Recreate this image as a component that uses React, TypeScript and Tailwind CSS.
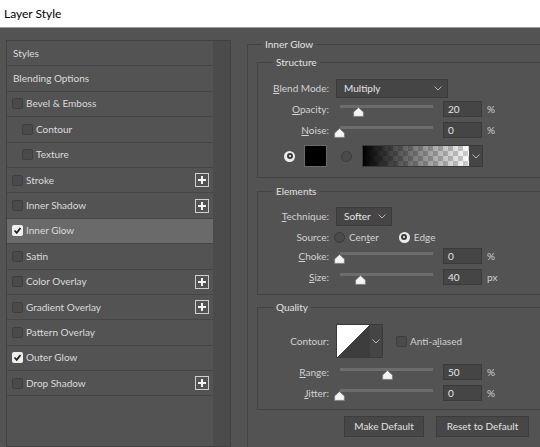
import React from 'react';

const FONT = { fontFamily: 'Lato, "Open Sans", sans-serif' };

type Row = {
	label: string;
	plain?: boolean;
	checked?: boolean;
	indent?: boolean;
	plus?: boolean;
	selected?: boolean;
};

const ROWS: Row[] = [
	{ label: 'Styles', plain: true },
	{ label: 'Blending Options', plain: true },
	{ label: 'Bevel & Emboss' },
	{ label: 'Contour', indent: true },
	{ label: 'Texture', indent: true },
	{ label: 'Stroke', plus: true },
	{ label: 'Inner Shadow', plus: true },
	{ label: 'Inner Glow', checked: true, selected: true },
	{ label: 'Satin' },
	{ label: 'Color Overlay', plus: true },
	{ label: 'Gradient Overlay', plus: true },
	{ label: 'Pattern Overlay' },
	{ label: 'Outer Glow', checked: true },
	{ label: 'Drop Shadow', plus: true },
];

function Checkbox({ checked }: { checked?: boolean }) {
	if (checked) {
		return (
			<span className="flex h-[11px] w-[11px] items-center justify-center rounded-[2px] bg-[#efefef]">
				<svg width="9" height="9" viewBox="0 0 9 9">
					<path d="M1.5 4.5 L3.7 6.8 L7.5 2" fill="none" stroke="#222" strokeWidth="1.8" />
				</svg>
			</span>
		);
	}
	return <span className="block h-[11px] w-[11px] rounded-[2px] border border-[#3e3e3e] bg-[#4a4a4a]" />;
}

function PlusBox() {
	return (
		<span className="ml-auto mr-[4px] flex h-[14px] w-[14px] items-center justify-center border border-[#cfcfcf]">
			<svg width="10" height="10" viewBox="0 0 10 10">
				<path d="M5 1 V9 M1 5 H9" stroke="#f2f2f2" strokeWidth="2" />
			</svg>
		</span>
	);
}

function Chevron() {
	return (
		<svg width="8" height="5" viewBox="0 0 8 5">
			<path d="M0.5 0.5 L4 4 L7.5 0.5" fill="none" stroke="#b5b5b5" strokeWidth="1" />
		</svg>
	);
}

function Radio({ checked }: { checked?: boolean }) {
	if (checked) {
		return (
			<span className="flex h-[11px] w-[11px] items-center justify-center rounded-full bg-[#ececec]">
				<span className="flex h-[6px] w-[6px] items-center justify-center rounded-full bg-[#3a3a3a]">
					<span className="block h-[2px] w-[2px] rounded-full bg-white" />
				</span>
			</span>
		);
	}
	return <span className="block h-[11px] w-[11px] rounded-full border border-[#3c3c3c] bg-[#4a4a4a]" />;
}

function Thumb({ left }: { left: number }) {
	return (
		<svg
			className="absolute top-[6px]"
			style={{ left }}
			width="11"
			height="10"
			viewBox="0 0 11 10"
		>
			<path d="M5.5 0.6 L10.4 5 L10.4 9.4 L0.6 9.4 L0.6 5 Z" fill="#f4f4f4" stroke="#7a7a7a" strokeWidth="0.8" />
		</svg>
	);
}

function Label({ first, rest, under }: { first?: string; rest: string; under?: boolean }) {
	return (
		<div className="w-[71px] shrink-0 text-right text-[#d2d2d2]">
			{under ? <span className="underline underline-offset-1">{first}</span> : first}
			{rest}
		</div>
	);
}

function SliderRow({
	first,
	rest,
	value,
	unit,
	thumb,
	mt,
}: {
	first: string;
	rest: string;
	value: string;
	unit: string;
	thumb: number;
	mt: string;
}) {
	return (
		<div className={`flex h-[16px] items-center ${mt}`}>
			<Label first={first} rest={rest} under />
			<div className="relative ml-[7px] h-full w-[100px]">
				<div className="absolute left-[4px] top-[4px] h-[3px] w-[93px] bg-[#6c6c6c]" />
				<Thumb left={thumb - 336 - 5} />
			</div>
			<div className="ml-[7px] flex h-[16px] w-[39px] items-center border border-[#3a3a3a] bg-[#454545] pl-[4px] text-[#e6e6e6]">
				{value}
			</div>
			<span className="ml-[5px] text-[#d2d2d2]">{unit}</span>
		</div>
	);
}

function Legend({ children }: { children: React.ReactNode }) {
	return <legend className="ml-[15px] px-[3px] text-[10px] leading-[14px] text-[#e2e2e2]">{children}</legend>;
}

export default function App() {
	return (
		<div className="h-[447px] w-[540px] overflow-hidden bg-[#535353] text-[10px]" style={FONT}>
			{/* title bar */}
			<div className="flex h-[28px] items-center border-b border-[#9c9c9c] bg-white pl-[4px] text-[12px] text-black">
				Layer Style
			</div>

			<div className="flex h-[419px]">
				{/* styles list */}
				<div className="ml-[6px] mt-[12px] flex w-[225px] border border-[#414141]">
					<div className="w-[206px]">
						{ROWS.map((r) => (
							<div
								key={r.label}
								className={`flex h-[25.4px] items-center border-b border-[#464646] text-[#dcdcdc] ${
									r.selected ? 'bg-[#6a6a6a]' : ''
								} ${r.plain ? 'pl-[6px]' : r.indent ? 'pl-[15px]' : 'pl-[5px]'}`}
							>
								{!r.plain && <Checkbox checked={r.checked} />}
								<span className={r.plain ? '' : 'ml-[3px]'}>{r.label}</span>
								{r.plus && <PlusBox />}
							</div>
						))}
					</div>
					<div className="flex-1 bg-[#4b4b4b]" />
				</div>

				{/* Inner Glow settings */}
				<fieldset className="ml-[16px] mt-[9px] flex-1 border-l border-t border-[#434343] pl-[9px]">
					<legend className="ml-[5px] px-[3px] text-[10px] leading-[14px] text-[#e2e2e2]">Inner Glow</legend>

					<fieldset className="mt-[4px] border-y border-l border-[#434343] pb-[10px]">
						<Legend>Structure</Legend>
						<div className="mt-[10px] flex h-[19px] items-center">
							<Label first="B" rest="lend Mode:" under />
							<div className="ml-[7px] flex h-[19px] w-[112px] items-center justify-between border border-[#3a3a3a] bg-[#454545] pl-[7px] pr-[5px] text-[#e6e6e6]">
								<span>Multiply</span>
								<Chevron />
							</div>
						</div>
						<SliderRow first="O" rest="pacity:" value="20" unit="%" thumb={358} mt="mt-[3px]" />
						<SliderRow first="N" rest="oise:" value="0" unit="%" thumb={339} mt="mt-[5px]" />
						<div className="mt-[7px] flex h-[22px] items-center pl-[26px]">
							<Radio checked />
							<div className="ml-[9px] h-[22px] w-[23px] border border-[#6a6a6a] bg-black" />
							<span className="ml-[14px]">
								<Radio />
							</span>
							<div className="ml-[10px] flex h-[22px] border border-[#3a3a3a]">
								<div className="w-[106px] bg-[linear-gradient(to_right,#000,rgba(0,0,0,0)),conic-gradient(#cfcfcf_25%,#fff_0_50%,#cfcfcf_0_75%,#fff_0)] [background-size:100%_100%,10px_10px]" />
								<div className="flex w-[13px] items-center justify-center bg-[#454545]">
									<Chevron />
								</div>
							</div>
						</div>
					</fieldset>

					<fieldset className="mt-[6px] border-y border-l border-[#434343] pb-[9px]">
						<Legend>Elements</Legend>
						<div className="mt-[9px] flex h-[19px] items-center">
							<Label first="T" rest="echnique:" under />
							<div className="ml-[7px] flex h-[19px] w-[56px] items-center justify-between border border-[#3a3a3a] bg-[#454545] pl-[7px] pr-[5px] text-[#e6e6e6]">
								<span>Softer</span>
								<Chevron />
							</div>
						</div>
						<div className="mt-[4px] flex h-[14px] items-center">
							<Label rest="Source:" />
							<div className="ml-[5px] flex items-center text-[#d2d2d2]">
								<Radio />
								<span className="ml-[4px]">
									Cen<span className="underline underline-offset-1">t</span>er
								</span>
								<span className="ml-[20px]">
									<Radio checked />
								</span>
								<span className="ml-[4px]">
									Ed<span className="underline underline-offset-1">g</span>e
								</span>
							</div>
						</div>
						<SliderRow first="C" rest="hoke:" value="0" unit="%" thumb={339} mt="mt-[4px]" />
						<SliderRow first="S" rest="ize:" value="40" unit="px" thumb={360} mt="mt-[5px]" />
					</fieldset>

					<fieldset className="mt-[5px] border-y border-l border-[#434343] pb-[8px]">
						<Legend>Quality</Legend>
						<div className="mt-[10px] flex h-[34px] items-center">
							<Label rest="Contour:" />
							<div className="ml-[7px] flex h-[34px] border border-[#3a3a3a]">
								<div className="w-[33px] bg-[linear-gradient(to_bottom_right,#fff_50%,#3d3d3d_50%)]" />
								<div className="flex w-[12px] items-center justify-center bg-[#454545]">
									<Chevron />
								</div>
							</div>
							<span className="ml-[13px]">
								<Checkbox />
							</span>
							<span className="ml-[3px] text-[#d2d2d2]">
								Anti-a<span className="underline underline-offset-1">l</span>iased
							</span>
						</div>
						<SliderRow first="R" rest="ange:" value="50" unit="%" thumb={387} mt="mt-[6px]" />
						<SliderRow first="J" rest="itter:" value="0" unit="%" thumb={339} mt="mt-[5px]" />
					</fieldset>

					<div className="ml-[87px] mt-[6px] flex gap-[12px] text-[#e2e2e2]">
						<button
							type="button"
							className="h-[21px] w-[80px] border border-[#3c3c3c] bg-[#474747]"
						>
							Make Default
						</button>
						<button
							type="button"
							className="h-[21px] w-[93px] border border-[#3c3c3c] bg-[#474747]"
						>
							Reset to Default
						</button>
					</div>
				</fieldset>
			</div>
		</div>
	);
}
